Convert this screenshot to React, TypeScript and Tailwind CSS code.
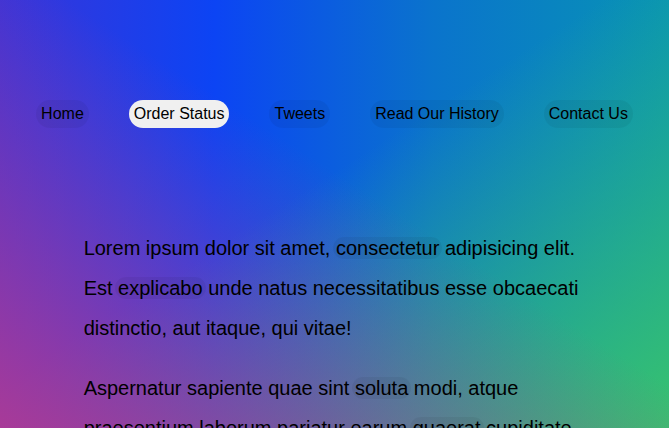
const links = ["Home", "Order Status", "Tweets", "Read Our History", "Contact Us"];

function Mark({ children }: { children: string }) {
  return <span className="rounded-full bg-black/5 px-[3px] -mx-[3px]">{children}</span>;
}

export default function App() {
  return (
    <div className="h-screen overflow-hidden bg-[linear-gradient(to_top_right,rgba(168,58,152,1)_0%,rgba(168,58,152,0)_55%),linear-gradient(to_top_left,rgba(56,194,110,1)_0%,rgba(56,194,110,0)_55%),linear-gradient(to_right,#3a34d8_0%,#0c44f4_32%,#0a74cc_65%,#0894b4_100%)] font-['Liberation_Sans',Arial,sans-serif] text-black">
      <nav className="flex justify-center gap-10 pt-[100px]">
        {links.map((l) => (
          <a
            key={l}
            href="#"
            className={
              l === "Order Status"
                ? "rounded-full bg-[#f0f0f0] px-[5px] py-[5px] text-base leading-[18px]"
                : "rounded-full bg-black/5 px-[5px] py-[5px] text-base leading-[18px]"
            }
          >
            {l}
          </a>
        ))}
      </nav>

      <main className="mx-auto mt-[100px] w-3/4 text-[20px] leading-[40px]">
        <p>
          Lorem ipsum dolor sit amet, <Mark>consectetur</Mark> adipisicing elit. Est{" "}
          <Mark>explicabo</Mark> unde natus necessitatibus esse obcaecati distinctio, aut
          itaque, qui vitae!
        </p>
        <p className="mt-5">
          Aspernatur sapiente quae sint <Mark>soluta</Mark> modi, atque praesentium laborum
          pariatur earum <Mark>quaerat</Mark> cupiditate, voluptatum tempora ipsa
          reprehenderit natus.
        </p>
      </main>
    </div>
  );
}
